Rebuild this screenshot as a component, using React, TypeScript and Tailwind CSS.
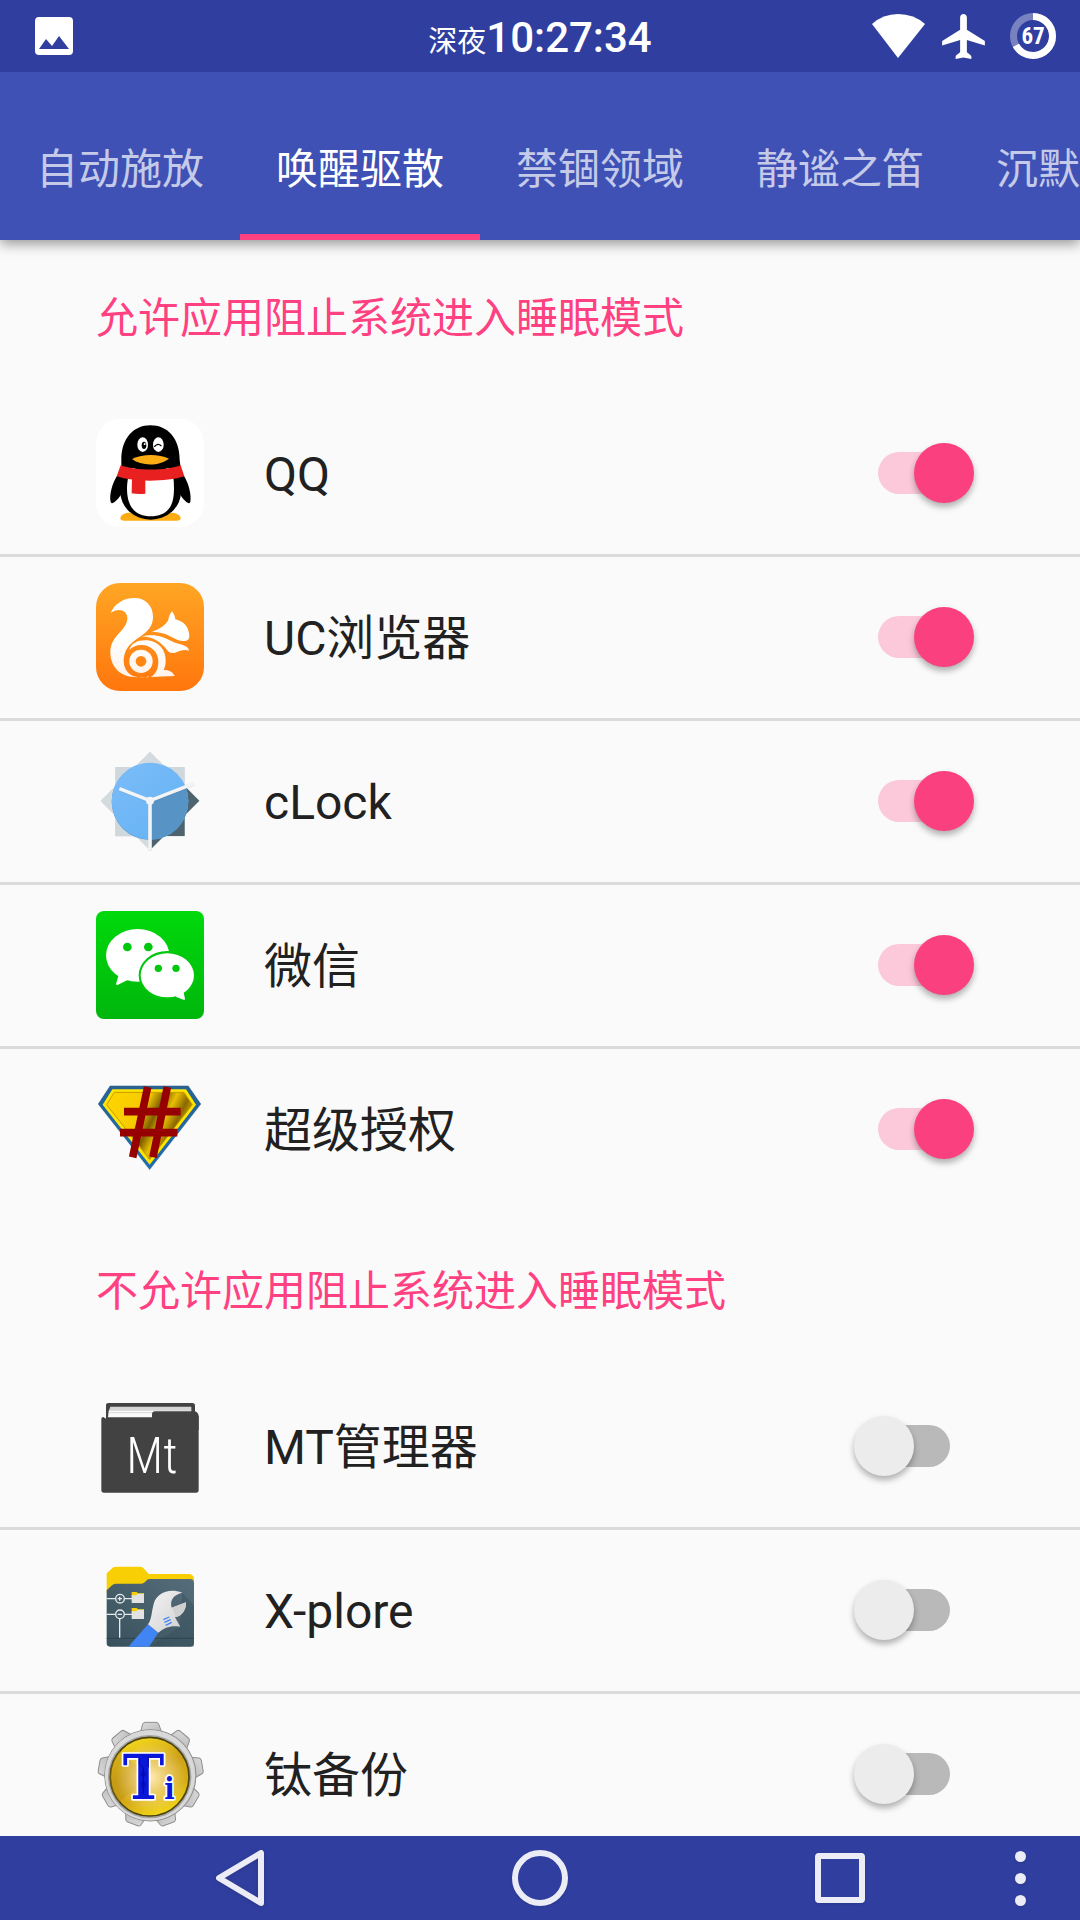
import { useState } from "react";
import type { ReactNode } from "react";

interface AppItem {
    id: string;
    name: string;
    icon: ReactNode;
    allowed: boolean;
}

const tabs = ["自动施放", "唤醒驱散", "禁锢领域", "静谧之笛", "沉默"];

function QQIcon() {
    return (
        <svg viewBox="48 57 324 324" className="size-[108px]" aria-hidden="true">
            <rect x="48" y="57" width="324" height="324" rx="72" fill="#fff" />
            <path d="M121 354C122 344 135 338 150 338H272C288 338 301 344 302 354Q302 362 290 362H133Q121 362 121 354Z" fill="#fbac13" />
            <path d="M112 226C97 250 87 285 92 306C97 317 113 300 126 280L298 280C310 300 326 317 331 306C335 285 326 250 311 226Z" />
            <ellipse cx="212" cy="276" rx="91" ry="83" />
            <path d="M124 205V180C124 116 160 76 211 76C264 76 299 116 299 180L302 205Z" />
            <path d="M145 230C139 258 140 288 147 306C157 336 182 349 212 349C243 349 268 336 277 306C283 288 283 258 280 230Z" fill="#fff" />
            <path d="M122 196C165 213 260 213 302 196L313 229C258 246 165 247 110 229Z" fill="#e8201f" />
            <path d="M156 236H196V281Q176 284 155 280Z" fill="#e8201f" />
            <path d="M156 177C188 161 236 161 267 176C238 199 184 199 156 177Z" fill="#fbac13" />
            <ellipse cx="188" cy="134" rx="16" ry="22" fill="#fff" />
            <ellipse cx="235" cy="134" rx="16" ry="22" fill="#fff" />
            <ellipse cx="192" cy="136" rx="7" ry="11" />
            <circle cx="194" cy="132" r="3" fill="#fff" />
            <path d="M224 139Q234 128 243 137" fill="none" stroke="#000" strokeWidth="4" strokeLinecap="round" />
        </svg>
    );
}

function UCIcon() {
    return (
        <svg viewBox="48 549 324 324" className="size-[108px]" aria-hidden="true">
            <defs>
                <linearGradient id="ucBg" x1="0" y1="0" x2="0" y2="1">
                    <stop offset="0" stopColor="#ffa624" />
                    <stop offset="1" stopColor="#ff760d" />
                </linearGradient>
                <linearGradient id="ucBody" x1="0" y1="594" x2="0" y2="832" gradientUnits="userSpaceOnUse">
                    <stop offset="0.5" stopColor="#fff" />
                    <stop offset="1" stopColor="#fff3ea" />
                </linearGradient>
            </defs>
            <rect x="48" y="549" width="324" height="324" rx="72" fill="url(#ucBg)" />
            <g fill="url(#ucBody)">
                <path d="M92 639C103 612 130 594 163 594C196 594 219 617 219 650C219 688 190 702 165 721C140 740 131 760 131 784C132 808 145 825 167 831C122 833 91 800 91 757C91 706 142 692 142 655C142 629 113 623 92 639Z" />
                <path d="M215 695C240 688 260 672 265 660C266 648 271 640 276 634C282 642 285 650 286 658C312 664 327 682 328 708C328 719 322 724 309 723C279 720 266 696 215 695Z" />
                <path d="M184 709C222 700 250 709 276 724C294 735 322 732 328 752C316 748 303 751 293 755C283 760 270 760 264 754C248 732 226 711 184 709Z" />
                <path d="M147 751C154 728 176 719 202 721C238 724 257 751 257 781C257 793 255 801 251 810C267 809 280 817 284 828L212 831C230 822 235 803 235 784C235 756 212 735 185 735C168 735 156 741 147 751Z" />
                <path d="M162 829Q184 836 208 829L204 832H167Z" />
                <circle cx="183" cy="784" r="35" />
            </g>
            <circle cx="183" cy="784" r="16" fill="#ff8514" />
        </svg>
    );
}

function ClockIcon() {
    return (
        <svg viewBox="48 51 324 324" className="size-[108px]" aria-hidden="true">
            <defs>
                <clipPath id="clockShade">
                    <path d="M210 212L372 148V375H210Z" />
                </clipPath>
                <linearGradient id="clockFace" x1="0" y1="0" x2="1" y2="1">
                    <stop offset="0" stopColor="#7cbcf8" />
                    <stop offset="1" stopColor="#62b2f5" />
                </linearGradient>
            </defs>
            <g className="drop-shadow-sm">
                <path d="M106 111H314V318H106Z" fill="#cfd8dc" />
                <path d="M210 65L358 212L210 360L62 212Z" fill="#d3dbdf" />
            </g>
            <g clipPath="url(#clockShade)" fill="#4d636d">
                <path d="M106 111H314V318H106Z" />
                <path d="M210 65L358 212L210 360L62 212Z" />
            </g>
            <circle cx="210" cy="215" r="115" fill="#5799cf" />
            <circle cx="210" cy="213" r="115" fill="url(#clockFace)" />
            <circle cx="210" cy="213" r="115" fill="#5793c5" clipPath="url(#clockShade)" />
            <path d="M210 212V360M210 212L343 160M210 212L118 176" stroke="#f3f4f5" strokeWidth="11" className="drop-shadow-sm" />
            <circle cx="210" cy="212" r="12" fill="#f3f4f5" />
        </svg>
    );
}

function WeChatIcon() {
    return (
        <svg viewBox="48 543 324 324" className="size-[108px]" aria-hidden="true">
            <defs>
                <linearGradient id="wechatBg" x1="0" y1="0" x2="0" y2="1">
                    <stop offset="0" stopColor="#00d90c" />
                    <stop offset="1" stopColor="#00b60c" />
                </linearGradient>
            </defs>
            <rect x="48" y="543" width="324" height="324" rx="24" fill="url(#wechatBg)" />
            <ellipse cx="173" cy="676" rx="95" ry="79" fill="#fff" />
            <path d="M117 732L108 762Q109 766 114 764L143 750Z" fill="#fff" />
            <ellipse cx="262" cy="736" rx="86" ry="73" fill="#00c60c" />
            <ellipse cx="262" cy="736" rx="80" ry="66" fill="#fff" />
            <path d="M287 800L310 809Q315 811 315 806L310 784Z" fill="#fff" />
            <g fill="#00c90c">
                <circle cx="142" cy="651" r="13" />
                <circle cx="205" cy="651" r="13" />
                <circle cx="235" cy="715" r="11" />
                <circle cx="288" cy="715" r="11" />
            </g>
        </svg>
    );
}

function SuperUserIcon() {
    return (
        <svg viewBox="48 45 324 324" className="size-[108px]" aria-hidden="true">
            <defs>
                <linearGradient id="suGold" x1="0" y1="0" x2="1" y2="0.4">
                    <stop offset="0" stopColor="#ffd500" />
                    <stop offset="0.45" stopColor="#f5cb00" />
                    <stop offset="0.6" stopColor="#806000" />
                    <stop offset="0.72" stopColor="#eac000" />
                    <stop offset="0.85" stopColor="#8a6800" />
                    <stop offset="1" stopColor="#e8bd00" />
                </linearGradient>
                <linearGradient id="suBlue" x1="0" y1="0" x2="0" y2="1">
                    <stop offset="0" stopColor="#2a6290" />
                    <stop offset="1" stopColor="#1d6dae" />
                </linearGradient>
            </defs>
            <path d="M90 77H325L363 132L209 329L54 132Z" fill="url(#suBlue)" className="drop-shadow-sm" />
            <path d="M97 88H318L348 134L209 314L68 134Z" fill="#ffe600" />
            <path d="M103 97H312L337 134L209 299L80 134Z" fill="url(#suGold)" stroke="#c79a00" strokeWidth="3" />
            <path d="M203 81L158 292M262 81L219 292M132 155H302M120 218H292" stroke="#960000" strokeWidth="23" />
        </svg>
    );
}

function MTIcon() {
    return (
        <svg viewBox="48 36 324 324" className="size-[108px]" aria-hidden="true">
            <path d="M78 116V76Q78 69 86 69H337Q345 69 345 77V98L356 108V330Q356 338 348 338H72Q64 338 64 330V116Q64 112 70 111Z" fill="#424242" />
            <path d="M91 80H334V94H86Z" fill="#d5d5d5" />
            <path d="M86 92H334V112H84Z" fill="#fafafa" />
            <path d="M88 98H218" stroke="#d8d8d8" strokeWidth="3" />
            <path d="M216 114V102Q217 94 225 94H345Q356 98 356 110V150H216Z" fill="#424242" />
            <text x="139" y="280" fill="#fff" className="font-['Roboto_Condensed','Liberation_Sans',sans-serif] text-[148px] font-light">
                Mt
            </text>
        </svg>
    );
}

function XploreIcon() {
    return (
        <svg viewBox="48 528 324 324" className="size-[108px]" aria-hidden="true">
            <defs>
                <linearGradient id="xpFolder" x1="0" y1="1" x2="1" y2="0">
                    <stop offset="0" stopColor="#37505b" />
                    <stop offset="1" stopColor="#566e7b" />
                </linearGradient>
                <linearGradient id="xpWrench" x1="0" y1="0" x2="1" y2="1">
                    <stop offset="0" stopColor="#f4f4f4" />
                    <stop offset="1" stopColor="#cfcfcf" />
                </linearGradient>
            </defs>
            <path d="M80 640V580L100 562Q104 560 110 560H180Q186 560 190 564L206 582H328Q342 584 342 598V640Z" fill="#f8cf04" />
            <path d="M80 631L96 616Q100 611 108 611H184Q190 611 194 607L201 600Q204 597 210 597H330Q342 597 342 609V790Q342 800 332 800H90Q80 800 80 790Z" fill="url(#xpFolder)" />
            <path d="M307 638L342 678V800H207L300 740Z" fill="#2f4550" opacity="0.3" />
            <path d="M80 775H342" stroke="#2e444e" strokeWidth="3" />
            <g stroke="#e6eaec" strokeWidth="4" fill="none">
                <path d="M80 656H106M134 656H156M80 703H106M134 703H156M119 717V773M113 656H126M119 650V662M113 703H126" />
                <circle cx="120" cy="656" r="13" />
                <circle cx="120" cy="703" r="13" />
            </g>
            <path d="M155 636H170L174 640H192V650H155ZM155 684H170L174 688H192V698H155Z" fill="#f8cf04" />
            <path d="M155 646H168L173 641H192V669H155ZM155 694H168L173 689H192V717H155Z" fill="#e2e2e2" />
            <path d="M204 733L145 800H207L235 758Z" fill="#4184f3" />
            <path d="M204 733C216 716 214 696 222 668C231 640 266 622 307 638C284 644 268 657 275 683L318 667C319 689 307 708 285 712L301 740C270 736 256 742 235 758Z" fill="url(#xpWrench)" />
            <path d="M275 683L318 667C319 689 307 708 287 712C285 702 281 692 275 683Z" fill="#d0d0d0" />
            <path d="M250 719L268 711M253 727L272 719M257 736L275 727" stroke="#4184f3" strokeWidth="4" />
        </svg>
    );
}

function TitaniumIcon() {
    const teeth = [0, 40, 80, 120, 160, 200, 240, 280, 320];

    return (
        <svg viewBox="48 90 324 324" className="size-[108px]" aria-hidden="true">
            <defs>
                <linearGradient id="tiGear" x1="0" y1="0" x2="1" y2="1">
                    <stop offset="0" stopColor="#dcdcdc" />
                    <stop offset="1" stopColor="#b4b4b4" />
                </linearGradient>
                <linearGradient id="tiGold" x1="0.3" y1="0" x2="0.7" y2="1">
                    <stop offset="0" stopColor="#f5da1c" />
                    <stop offset="0.4" stopColor="#cfa216" />
                    <stop offset="0.7" stopColor="#d6ac14" />
                    <stop offset="1" stopColor="#f6dc1c" />
                </linearGradient>
                <radialGradient id="tiGlow">
                    <stop offset="0" stopColor="#ffe9b0" />
                    <stop offset="1" stopColor="#ffe9b0" stopOpacity="0" />
                </radialGradient>
            </defs>
            <g fill="url(#tiGear)" stroke="#8e8e8e" strokeWidth="3">
                {teeth.map((angle) => (
                    <path key={angle} d="M178 140L188 102Q190 97 196 97H228Q234 97 236 102L250 140Z" transform={`rotate(${angle} 212 254)`} />
                ))}
                <circle cx="211" cy="256" r="137" />
            </g>
            <circle cx="210" cy="256" r="135" fill="#d9d9d9" />
            <circle cx="209" cy="260" r="125" fill="#a3a3a3" />
            <circle cx="209" cy="260" r="118" fill="url(#tiGold)" stroke="#4d430c" strokeWidth="5" />
            <path d="M118 336A118 118 0 0 1 118 184L209 260Z" fill="#b98e14" opacity="0.4" />
            <circle cx="212" cy="262" r="105" fill="url(#tiGlow)" />
            <text
                x="128"
                y="326"
                fill="#0a16d8"
                stroke="#fff"
                strokeWidth="10"
                strokeLinejoin="round"
                className="font-['DejaVu_Serif_Condensed','DejaVu_Serif',serif] text-[186px] font-bold [paint-order:stroke]"
            >
                T<tspan className="text-[92px]">i</tspan>
            </text>
            <g fill="none" stroke="#0409a0" strokeWidth="3">
                <path d="M178 205V222L190 234V312M205 200V232" />
                <circle cx="190" cy="252" r="6" />
                <circle cx="190" cy="284" r="6" />
            </g>
        </svg>
    );
}

const initialApps: AppItem[] = [
    { id: "qq", name: "QQ", icon: <QQIcon />, allowed: true },
    { id: "uc", name: "UC浏览器", icon: <UCIcon />, allowed: true },
    { id: "clock", name: "cLock", icon: <ClockIcon />, allowed: true },
    { id: "wechat", name: "微信", icon: <WeChatIcon />, allowed: true },
    { id: "supersu", name: "超级授权", icon: <SuperUserIcon />, allowed: true },
    { id: "mt", name: "MT管理器", icon: <MTIcon />, allowed: false },
    { id: "xplore", name: "X-plore", icon: <XploreIcon />, allowed: false },
    { id: "titanium", name: "钛备份", icon: <TitaniumIcon />, allowed: false },
];

function StatusBar() {
    return (
        <div className="grid h-[72px] grid-cols-[1fr_auto_1fr] items-center bg-[#303f9f] px-6 text-white">
            <svg viewBox="0 0 38 38" className="ml-[11px] size-[38px]" aria-hidden="true">
                <path d="M4 0H34Q38 0 38 4V34Q38 38 34 38H4Q0 38 0 34V4Q0 0 4 0ZM4 32H34L24 19L17 29L11 22Z" fill="currentColor" fillRule="evenodd" />
            </svg>
            <div className="flex items-baseline pt-0.5">
                <span className="text-[29px]">深夜</span>
                <span className="text-[42px] font-medium">10:27:34</span>
            </div>
            <div className="flex items-center justify-end">
                <svg viewBox="0 0 53 44" className="h-11 w-[53px]" aria-hidden="true">
                    <path d="M0 10Q11 0 26 0Q42 0 53 10L26 44Z" fill="currentColor" />
                </svg>
                <svg viewBox="2 2 19 20" className="ml-[17px] h-[45px] w-[43px]" aria-hidden="true">
                    <path d="M21 16v-2l-8-5V3.5c0-.83-.67-1.5-1.5-1.5S10 2.67 10 3.5V9l-8 5v2l8-2.5V19l-1.700 1.300Q8 20.600 8 21V22l3.500-.700 3.500.700v-1Q15 20.600 14.700 20.300L13 19v-5.500l8 2.500z" fill="currentColor" />
                </svg>
                <svg viewBox="0 0 46 46" className="ml-[25px] size-[46px]" aria-hidden="true">
                    <g fill="none" stroke="currentColor" strokeWidth="7" transform="rotate(-90 23 23)">
                        <circle cx="23" cy="23" r="19.5" opacity="0.35" />
                        <circle cx="23" cy="23" r="19.5" pathLength="100" strokeDasharray="67 33" />
                    </g>
                    <text x="23" y="31" textAnchor="middle" fill="currentColor" className="font-['Roboto_Condensed','Roboto',sans-serif] text-[23px] font-bold">
                        67
                    </text>
                </svg>
            </div>
        </div>
    );
}

function AppRow({ app, onToggle }: { app: AppItem; onToggle: (id: string) => void }) {
    return (
        <li className="border-b-[3px] border-[#dbdbdb] last:border-transparent">
            <label className="flex items-center pt-[26px] pr-[130px] pb-[27px] pl-24">
                {app.icon}
                <span className="ml-[60px] flex-1 pt-1 text-5xl text-[#212121]">{app.name}</span>
                <input
                    type="checkbox"
                    role="switch"
                    checked={app.allowed}
                    onChange={() => onToggle(app.id)}
                    className="relative h-[42px] w-[72px] appearance-none rounded-full bg-[#b9b9b9] before:absolute before:-top-[9px] before:-left-6 before:size-[60px] before:rounded-full before:bg-[#ececec] before:shadow-[0_4px_6px_rgba(0,0,0,0.3)] checked:bg-[#fbc9da] checked:before:left-9 checked:before:bg-[#fb407f]"
                />
            </label>
        </li>
    );
}

function NavBar() {
    return (
        <nav className="flex h-[84px] shrink-0 bg-[#303f9f] pr-[30px] pl-[90px] text-[#ebecf6]">
            <button aria-label="返回" className="flex flex-1 items-center justify-center">
                <svg viewBox="0 0 48 56" className="h-14 w-12 drop-shadow-sm" aria-hidden="true">
                    <path d="M45 3V53L3 28Z" fill="none" stroke="currentColor" strokeWidth="6" strokeLinejoin="round" />
                </svg>
            </button>
            <button aria-label="主页" className="flex flex-1 items-center justify-center">
                <span className="size-14 rounded-full border-[6px] border-current shadow-sm" />
            </button>
            <button aria-label="最近任务" className="flex flex-1 items-center justify-center">
                <span className="size-[50px] rounded-sm border-[6px] border-current shadow-sm" />
            </button>
            <button aria-label="菜单" className="flex w-[60px] flex-col items-center justify-center gap-[11px]">
                <span className="size-[11px] rounded-full bg-current shadow-sm" />
                <span className="size-[11px] rounded-full bg-current shadow-sm" />
                <span className="size-[11px] rounded-full bg-current shadow-sm" />
            </button>
        </nav>
    );
}

export default function App() {
    const [apps, setApps] = useState<AppItem[]>(initialApps);
    const [activeTab, setActiveTab] = useState(1);

    const handleToggle = (id: string) => {
        setApps(apps.map((app) => (app.id === id ? { ...app, allowed: !app.allowed } : app)));
    };

    const sections = [
        { title: "允许应用阻止系统进入睡眠模式", items: apps.filter((app) => app.allowed) },
        { title: "不允许应用阻止系统进入睡眠模式", items: apps.filter((app) => !app.allowed) },
    ];

    return (
        <div className="flex h-screen flex-col bg-[#fafafa] font-['Roboto','Noto_Sans_CJK_SC',sans-serif]">
            <header className="z-10 shrink-0 bg-[#3f51b5] shadow-[0_4px_12px_rgba(0,0,0,0.4)]">
                <StatusBar />
                <div role="tablist" className="flex overflow-hidden pt-6">
                    {tabs.map((tab, index) => (
                        <button
                            key={tab}
                            role="tab"
                            aria-selected={index === activeTab}
                            onClick={() => setActiveTab(index)}
                            className={
                                index === activeTab
                                    ? "h-36 shrink-0 border-b-[6px] border-[#ff4081] px-9 pt-2 text-[42px] text-white"
                                    : "h-36 shrink-0 border-b-[6px] border-transparent px-9 pt-2 text-[42px] text-[#c5cae9]"
                            }
                        >
                            {tab}
                        </button>
                    ))}
                </div>
            </header>
            <main className="min-h-0 flex-1 overflow-y-auto [scrollbar-width:none]">
                {sections.map((section) => (
                    <section key={section.title}>
                        <h2 className="flex h-[153px] items-center pt-1 pl-24 text-[42px] text-[#ff4081]">{section.title}</h2>
                        <ul>
                            {section.items.map((app) => (
                                <AppRow key={app.id} app={app} onToggle={handleToggle} />
                            ))}
                        </ul>
                    </section>
                ))}
            </main>
            <NavBar />
        </div>
    );
}
